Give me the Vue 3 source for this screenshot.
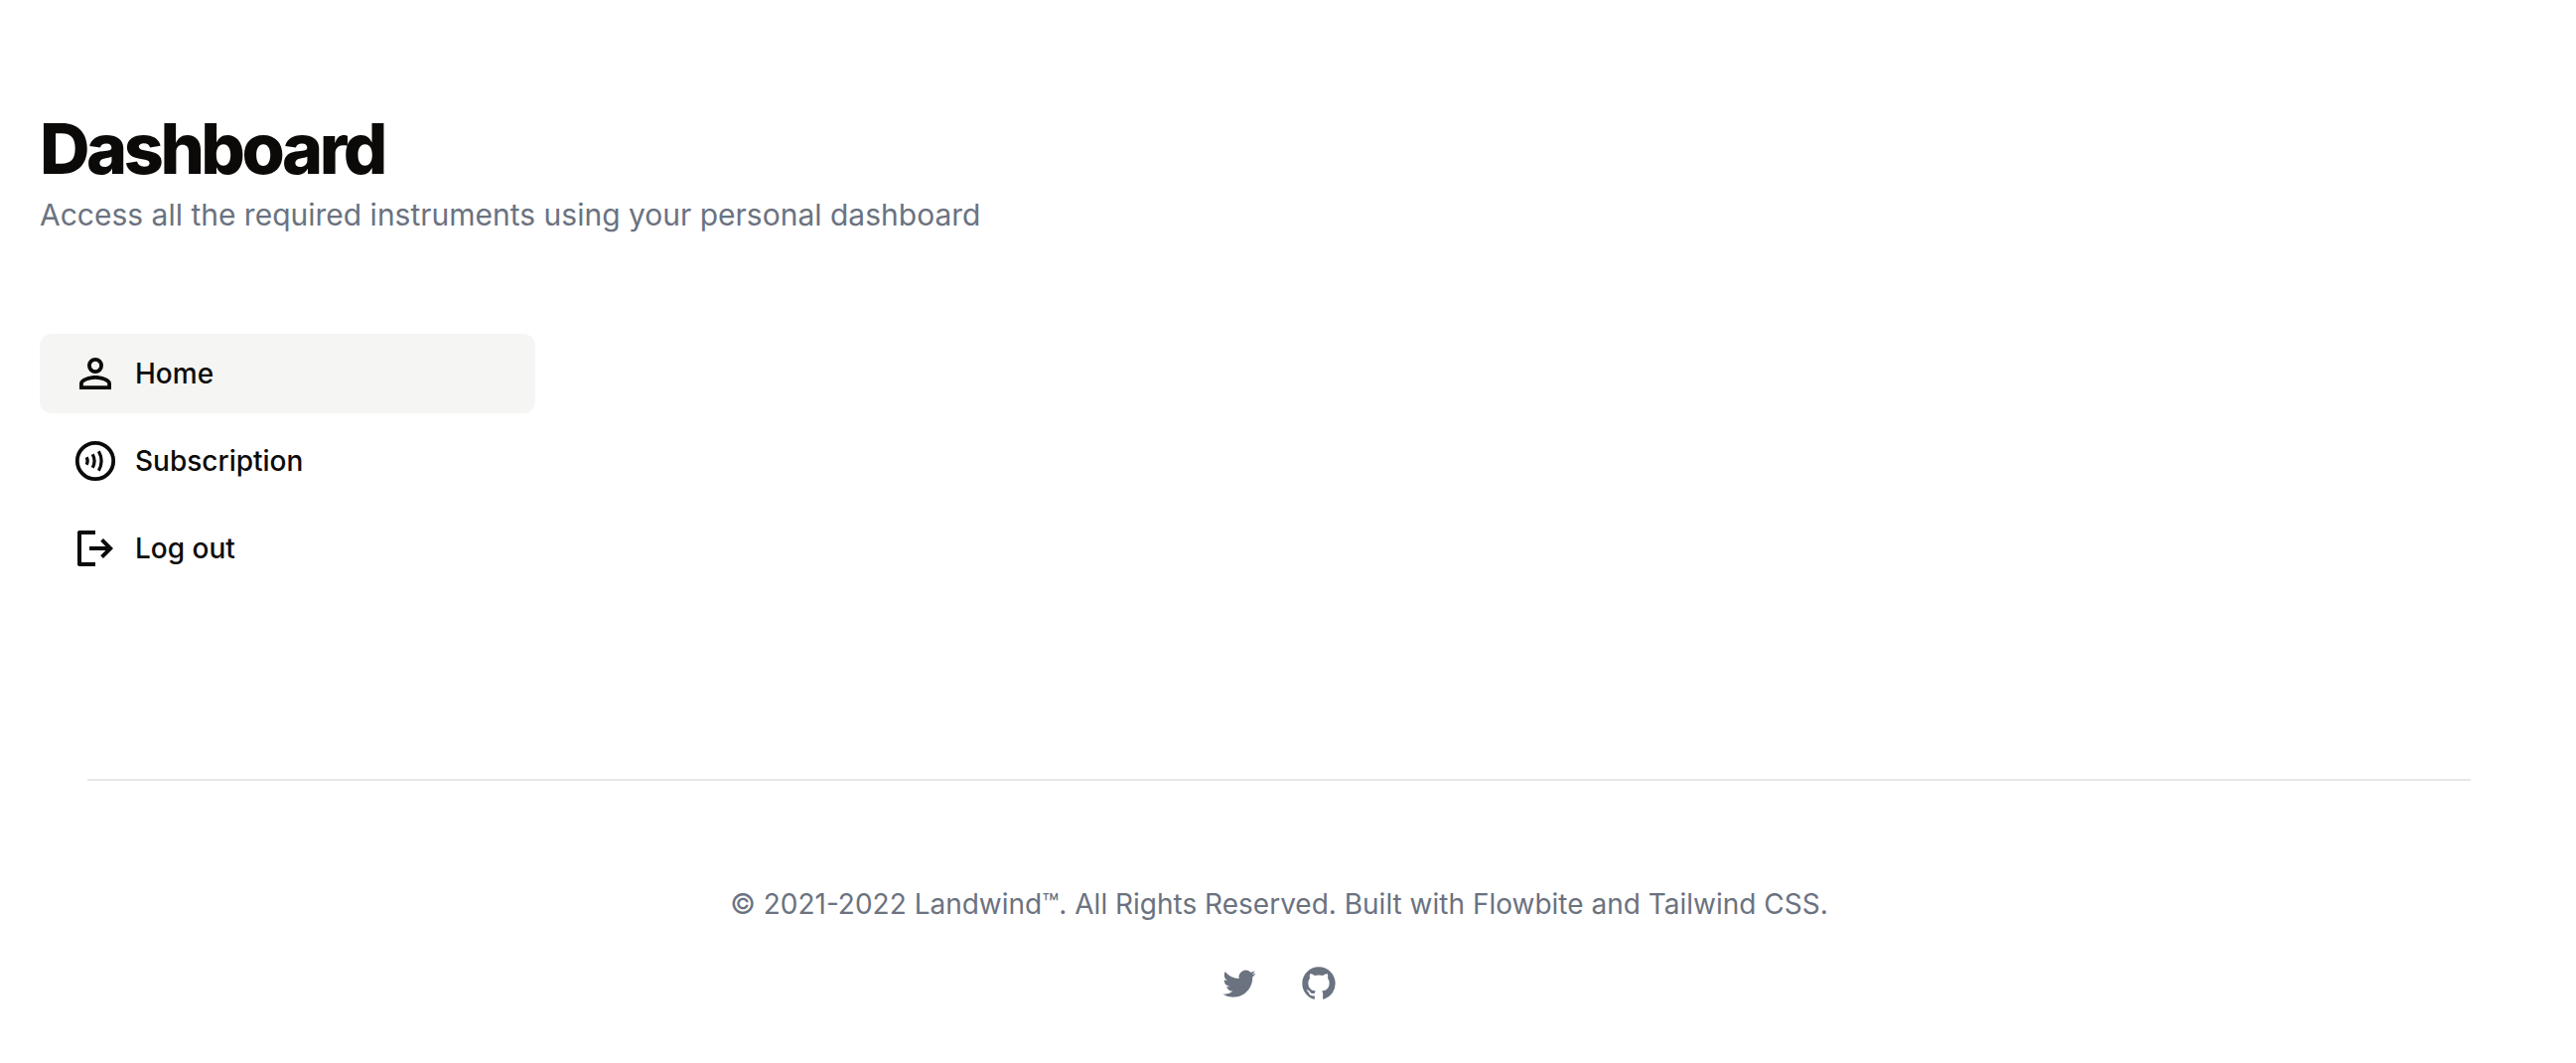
<script setup>
const navItems = [
  { id: 'home', label: 'Home', href: '#home', active: true },
  { id: 'subscription', label: 'Subscription', href: '#subscription', active: false },
  { id: 'logout', label: 'Log out', href: '#logout', active: false },
]
</script>

<template>
  <div class="page">
    <main class="dashboard">
      <header class="intro">
        <h1>Dashboard</h1>
        <p>Access all the required instruments using your personal dashboard</p>
      </header>

      <nav class="sidebar" aria-label="Dashboard">
        <a
          v-for="item in navItems"
          :key="item.id"
          :href="item.href"
          class="nav-link"
          :class="{ active: item.active }"
          :aria-current="item.active ? 'page' : undefined"
        >
          <svg v-if="item.id === 'home'" class="nav-icon" viewBox="0 0 24 24" fill="currentColor" aria-hidden="true">
            <path d="M12 4a4 4 0 0 1 4 4 4 4 0 0 1-4 4 4 4 0 0 1-4-4 4 4 0 0 1 4-4m0 1.900a2.100 2.100 0 1 0 0 4.200A2.100 2.100 0 0 0 12 5.900M12 13c2.670 0 8 1.330 8 4v3H4v-3c0-2.670 5.330-4 8-4m0 1.900c-2.970 0-6.100 1.460-6.100 2.100v1.100h12.200V17c0-.640-3.130-2.100-6.100-2.100z" />
          </svg>
          <svg v-else-if="item.id === 'subscription'" class="nav-icon" viewBox="0 0 24 24" fill="none" stroke="currentColor" aria-hidden="true">
            <circle cx="12" cy="12" r="9.100" stroke-width="1.900" />
            <path d="M7.600 10.100q1 1.900 0 3.800M10.600 8.600q1.900 3.400 0 6.800M13.700 7.100q2.700 4.900 0 9.800" stroke-width="1.600" />
          </svg>
          <svg v-else class="nav-icon" viewBox="0 0 24 24" fill="currentColor" aria-hidden="true">
            <path d="M4 3h8v2H5v14h7v2H4c-.550 0-1-.450-1-1V4c0-.550.450-1 1-1zM9 11h8.200l-2.600-2.600L16 7l5 5-5 5-1.400-1.400 2.600-2.600H9z" />
          </svg>
          <span>{{ item.label }}</span>
        </a>
      </nav>
    </main>

    <footer class="footer">
      <hr />
      <p>© 2021-2022 Landwind™. All Rights Reserved. Built with Flowbite and Tailwind CSS.</p>
      <div class="socials">
        <a href="#twitter" aria-label="Twitter">
          <svg viewBox="0 0 24 24" fill="currentColor" aria-hidden="true">
            <path d="M8.290 20.251c7.547 0 11.675-6.253 11.675-11.675 0-.178 0-.355-.012-.530A8.348 8.348 0 0022 5.920a8.190 8.190 0 01-2.357.646 4.118 4.118 0 001.804-2.270 8.224 8.224 0 01-2.605.996 4.107 4.107 0 00-6.993 3.743 11.650 11.650 0 01-8.457-4.287 4.106 4.106 0 001.270 5.477A4.072 4.072 0 012.800 9.713v.052a4.105 4.105 0 003.292 4.022 4.095 4.095 0 01-1.853.070 4.108 4.108 0 003.834 2.850A8.233 8.233 0 012 18.407a11.616 11.616 0 006.290 1.840" />
          </svg>
        </a>
        <a href="#github" aria-label="GitHub">
          <svg viewBox="0 0 24 24" fill="currentColor" aria-hidden="true">
            <path fill-rule="evenodd" d="M12 2C6.477 2 2 6.484 2 12.017c0 4.425 2.865 8.180 6.839 9.504.500.092.682-.217.682-.483 0-.237-.008-.868-.013-1.703-2.782.605-3.369-1.343-3.369-1.343-.454-1.158-1.110-1.466-1.110-1.466-.908-.620.069-.608.069-.608 1.003.070 1.531 1.032 1.531 1.032.892 1.530 2.341 1.088 2.910.832.092-.647.350-1.088.636-1.338-2.220-.253-4.555-1.113-4.555-4.951 0-1.093.390-1.988 1.029-2.688-.103-.253-.446-1.272.098-2.650 0 0 .840-.270 2.750 1.026A9.564 9.564 0 0112 6.844c.850.004 1.705.115 2.504.337 1.909-1.296 2.747-1.027 2.747-1.027.546 1.379.202 2.398.100 2.651.640.700 1.028 1.595 1.028 2.688 0 3.848-2.339 4.695-4.566 4.943.359.309.678.920.678 1.855 0 1.338-.012 2.419-.012 2.747 0 .268.180.580.688.482A10.019 10.019 0 0022 12.017C22 6.484 17.522 2 12 2z" clip-rule="evenodd" />
          </svg>
        </a>
      </div>
    </footer>
  </div>
</template>

<style>
body {
  margin: 0;
  background: #fff;
}
</style>

<style scoped>
.page {
  box-sizing: border-box;
  padding: 110px 58px 56px 40px;
  font-family: Inter, "Liberation Sans", sans-serif;
  color: #0c0a09;
}

h1,
p {
  margin: 0;
}

.dashboard {
  display: flex;
  flex-direction: column;
  gap: 96px;
}

.intro h1 {
  margin-bottom: 2px;
  font-size: 70px;
  line-height: 80px;
  font-weight: 800;
  letter-spacing: -0.05em;
}

.intro p {
  font-size: 30px;
  line-height: 48px;
  font-weight: 400;
  color: #6b7280;
}

.sidebar {
  display: flex;
  flex-direction: column;
  gap: 8px;
  width: 20%;
}

.nav-link {
  display: flex;
  align-items: center;
  gap: 16px;
  padding: 16px 32px;
  border-radius: 12px;
  font-size: 28px;
  line-height: 40px;
  font-weight: 500;
  color: inherit;
  text-decoration: none;
}

.nav-link.active {
  background: #f5f5f4;
}

.nav-icon {
  width: 48px;
  height: 48px;
}

.footer {
  display: flex;
  flex-direction: column;
  align-items: center;
  margin: 192px 48px 0;
  color: #6b7280;
}

.footer hr {
  width: 100%;
  height: 2px;
  margin: 0 0 104px;
  border: 0;
  background: #e5e7eb;
}

.footer p {
  font-size: 28px;
  line-height: 40px;
  text-align: center;
}

.socials {
  display: flex;
  gap: 40px;
  margin-top: 40px;
}

.socials a {
  display: block;
  color: inherit;
}

.socials svg {
  display: block;
  width: 40px;
  height: 40px;
}
</style>
